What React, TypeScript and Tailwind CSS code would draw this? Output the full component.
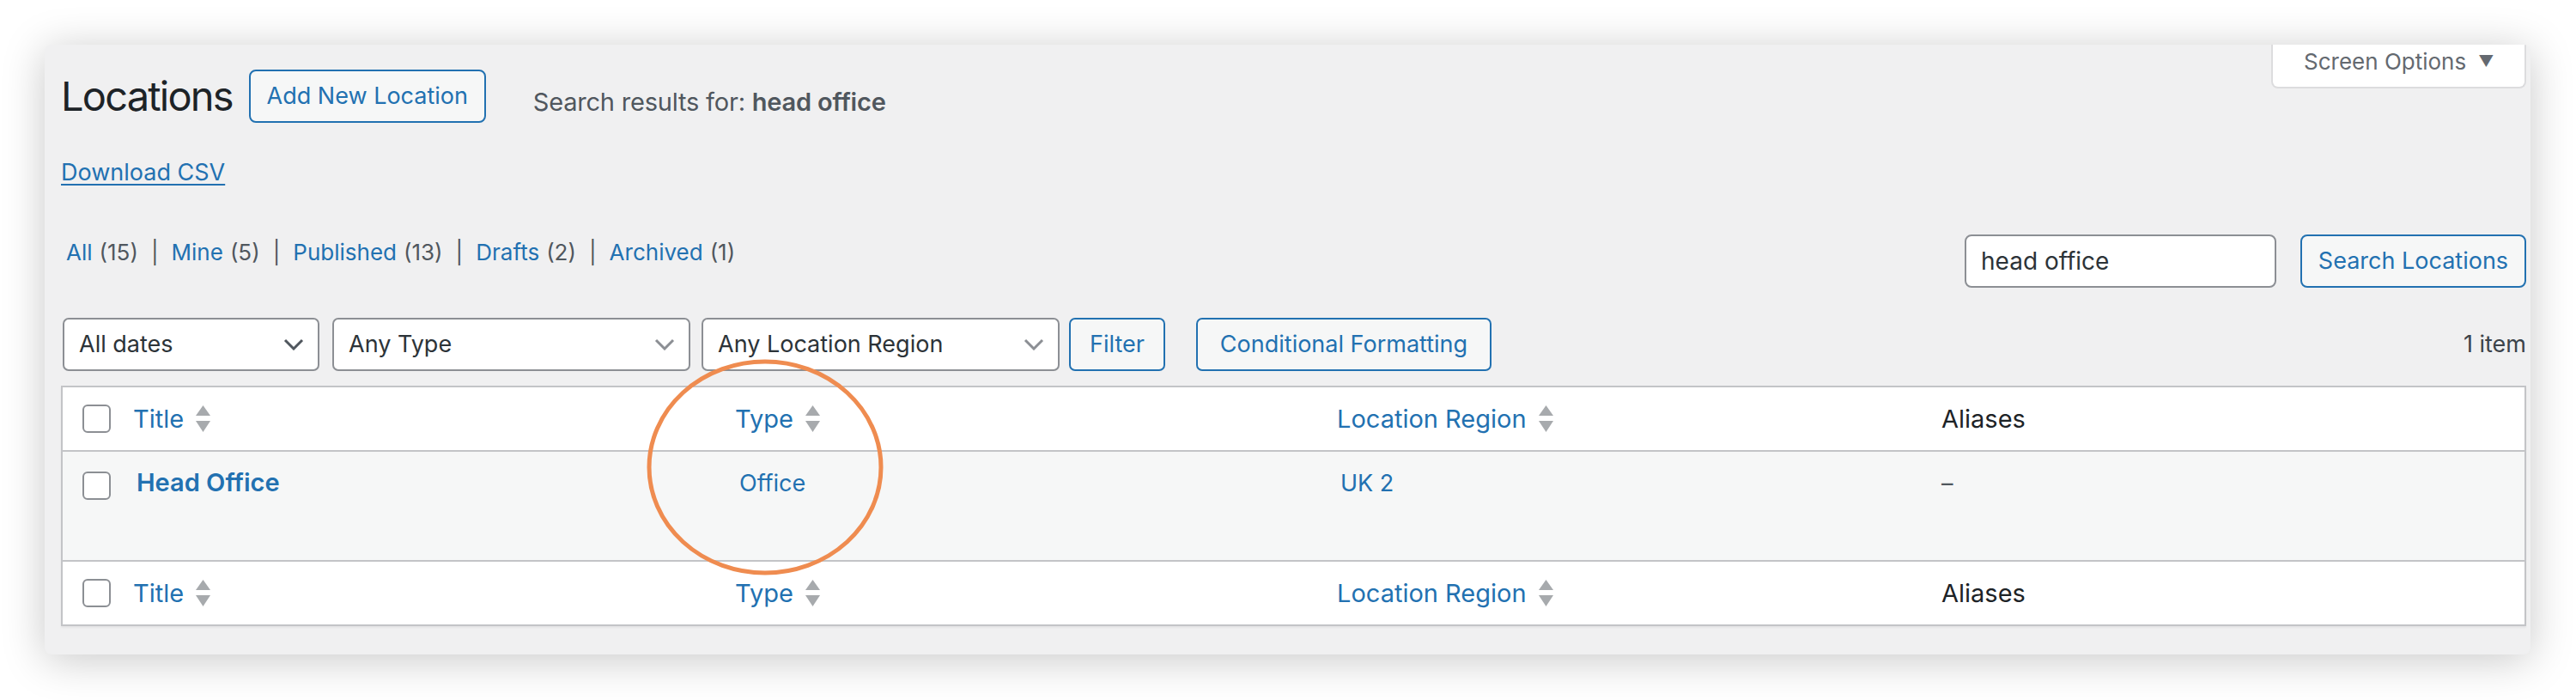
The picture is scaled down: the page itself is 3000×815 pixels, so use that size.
import React from 'react'

const BLUE = 'text-[#2271b1]'

function SortArrows() {
  return (
    <svg width="17" height="31" viewBox="0 0 17 31" className="ml-[14px] shrink-0">
      <path d="M8.5 0 L17 12 L0 12 Z" fill="#a7aaad" />
      <path d="M0 18 L17 18 L8.5 31 Z" fill="#a7aaad" />
    </svg>
  )
}

function Checkbox() {
  return <span className="block w-[33px] h-[33px] rounded-[6px] border-2 border-[#8c8f94] bg-white" />
}

function Chevron({ dark }: { dark?: boolean }) {
  return (
    <svg width="24" height="14" viewBox="0 0 24 14" className="shrink-0">
      <path d="M2 2 L12 12 L22 2" fill="none" stroke={dark ? '#50575e' : '#8c8f94'} strokeWidth="3" />
    </svg>
  )
}

function Select({ label, width, dark }: { label: string; width: string; dark?: boolean }) {
  return (
    <div className={`${width} h-[62px] flex items-center justify-between pl-[17px] pr-[16px] rounded-[7px] border-2 border-[#8c8f94] bg-white text-[27px] text-[#2c3338]`}>
      <span>{label}</span>
      <Chevron dark={dark} />
    </div>
  )
}

function HeaderRow({ footer }: { footer?: boolean }) {
  const cols = ['Title', 'Type', 'Location Region']
  return (
    <div className={`grid grid-cols-[67px_701px_701px_704px_1fr] h-[75px] items-center bg-white ${footer ? 'border-t-2 border-[#c3c4c7]' : 'border-b-2 border-[#c3c4c7]'}`}>
      <div className="pl-[23px]">
        <Checkbox />
      </div>
      {cols.map((c) => (
        <div key={c} className="flex items-center pl-[15px]">
          <span className={`text-[29px] ${BLUE}`}>{c}</span>
          <SortArrows />
        </div>
      ))}
      <div className="pl-[15px] text-[29px] text-[#1d2327]">Aliases</div>
    </div>
  )
}

export default function App() {
  const views = [
    { name: 'All', count: 15 },
    { name: 'Mine', count: 5 },
    { name: 'Published', count: 13 },
    { name: 'Drafts', count: 2 },
    { name: 'Archived', count: 1 },
  ]

  return (
    <div className="w-[3000px] h-[815px] bg-white pt-[52px] pl-[52px] font-[Inter,sans-serif]">
      <div className="relative w-[2895px] h-[710px] rounded-[8px] bg-[#f0f0f1] shadow-[0_6px_50px_rgba(0,0,0,0.22)] overflow-hidden pl-[19px] pr-[5px]">
        {/* heading row */}
        <div className="flex items-start justify-between">
          <div className="flex items-start mt-[29px]">
            <h1 className="text-[47px] tracking-[-1.8px] leading-[62px] h-[62px] text-[#1d2327] font-normal">Locations</h1>
            <a className={`ml-[19px] h-[62px] w-[276px] flex items-center justify-center rounded-[8px] border-2 border-[#2271b1] bg-[#f6f7f7] text-[27px] ${BLUE}`}>
              Add New Location
            </a>
            <span className="ml-[55px] mt-[7px] leading-[62px] text-[29px] tracking-[-0.2px] text-[#50575e]">
              Search results for: <b className="font-semibold">head office</b>
            </span>
          </div>
          <div className="w-[297px] h-[51px] flex items-start pl-[36px] rounded-b-[8px] border-2 border-t-0 border-[#dcdcde] bg-white text-[26px] leading-[40px] text-[#646970]">
            <span>Screen Options</span>
            <span className="ml-[14px] text-[18px]">▼</span>
          </div>
        </div>

        {/* download link */}
        <div className="mt-[31px] h-[40px] text-[27px] leading-[40px]">
          <a className={`underline underline-offset-[4px] decoration-2 ${BLUE}`}>Download CSV</a>
        </div>

        {/* views + search */}
        <div className="mt-[52px] flex items-start justify-between">
          <ul className="flex items-center mt-[1px] text-[26px] leading-[40px] pl-[6px]">
            {views.map((v, i) => (
              <li key={v.name} className="flex items-center">
                <a className={BLUE}>{v.name}</a>
                <span className="ml-[8px] text-[#50575e]">({v.count})</span>
                {i < views.length - 1 && <span className="mx-[15px] text-[#50575e]">|</span>}
              </li>
            ))}
          </ul>
          <div className="flex items-center gap-[28px]">
            <div className="w-[363px] h-[62px] flex items-center pl-[17px] rounded-[8px] border-2 border-[#8c8f94] bg-white text-[28px] text-[#2c3338]">
              head office
            </div>
            <div className={`w-[263px] h-[62px] flex items-center justify-center rounded-[8px] border-2 border-[#2271b1] bg-[#f6f7f7] text-[27px] ${BLUE}`}>
              Search Locations
            </div>
          </div>
        </div>

        {/* filters */}
        <div className="mt-[35px] flex items-center justify-between">
          <div className="flex items-center">
            <div className="ml-[2px]">
              <Select label="All dates" width="w-[299px]" dark />
            </div>
            <div className="ml-[15px]">
              <Select label="Any Type" width="w-[417px]" />
            </div>
            <div className="ml-[13px]">
              <Select label="Any Location Region" width="w-[417px]" />
            </div>
            <div className={`ml-[11px] w-[112px] h-[62px] flex items-center justify-center rounded-[7px] border-2 border-[#2271b1] bg-[#f6f7f7] text-[27px] ${BLUE}`}>
              Filter
            </div>
            <div className={`ml-[36px] w-[344px] h-[62px] flex items-center justify-center rounded-[7px] border-2 border-[#2271b1] bg-[#f6f7f7] text-[27px] ${BLUE}`}>
              Conditional Formatting
            </div>
          </div>
          <span className="text-[27px] text-[#3c434a]">1 item</span>
        </div>

        {/* list table */}
        <div className="mt-[17px] border-2 border-[#c3c4c7] bg-white shadow-[0_2px_2px_rgba(0,0,0,0.05)]">
          <HeaderRow />
          <div className="grid grid-cols-[67px_701px_701px_704px_1fr] h-[126px] items-start bg-[#f6f7f7]">
            <div className="pl-[23px] pt-[23px]">
              <Checkbox />
            </div>
            <div className={`pl-[19px] pt-[16px] text-[29px] leading-[40px] font-semibold ${BLUE}`}>
              <a>Head Office</a>
            </div>
            <div className={`pl-[20px] pt-[17px] text-[27px] leading-[40px] ${BLUE}`}>
              <a>Office</a>
            </div>
            <div className={`pl-[19px] pt-[17px] text-[27px] leading-[40px] ${BLUE}`}>
              <a>UK 2</a>
            </div>
            <div className="pl-[15px] pt-[17px] text-[27px] leading-[40px] text-[#50575e]">–</div>
          </div>
          <HeaderRow footer />
        </div>

        {/* annotation circle */}
        <svg className="absolute left-[700px] top-[365px] pointer-events-none" width="278" height="254" viewBox="0 0 278 254">
          <ellipse cx="139" cy="127" rx="135" ry="123" fill="none" stroke="#ef8c50" strokeWidth="5" />
        </svg>
      </div>
    </div>
  )
}
